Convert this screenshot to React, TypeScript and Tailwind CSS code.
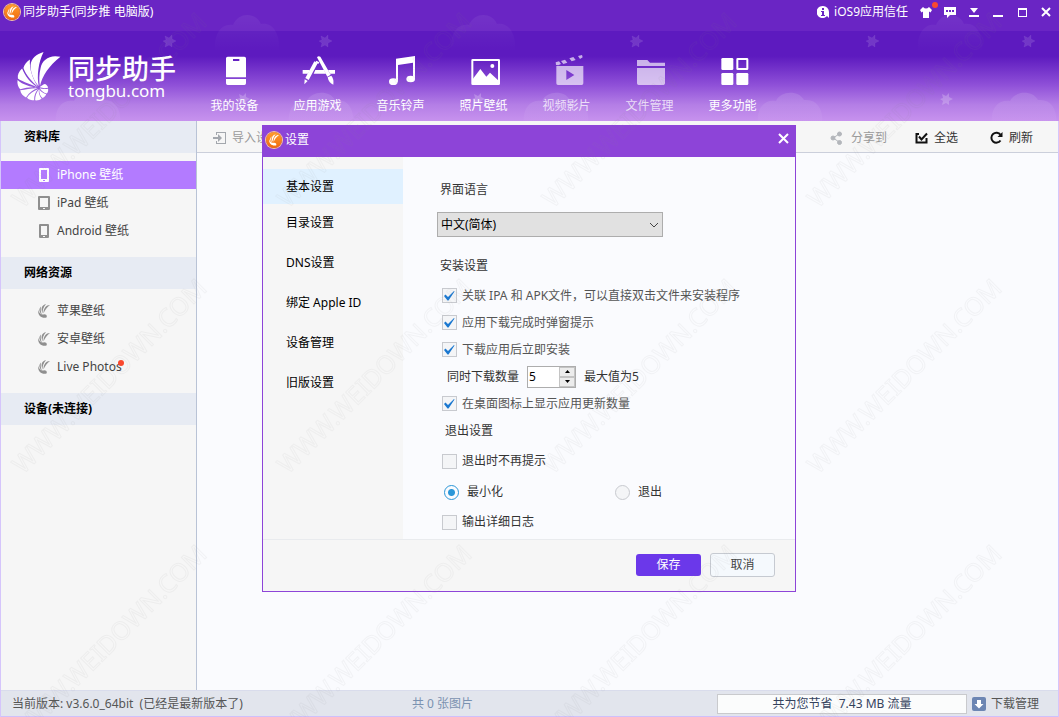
import React from "react";

interface NavItemI {
  label: string;
  viewBox: string;
  dimmed?: boolean;
  icon: React.ReactNode;
}

const navItems: NavItemI[] = [
  {
    label: "我的设备",
    viewBox: "657 165 96 90",
    icon: (
      <path
        fillRule="evenodd"
        d="M683 170h50q5 0 5 5v57h-60v-57q0-5 5-5zM699 177v6h19v-6zM678 237h60v13q0 5-5 5h-50q-5 0-5-5z"
      />
    ),
  },
  {
    label: "应用游戏",
    viewBox: "126 165 96 90",
    icon: (
      <>
        <path d="M128 210h22l-6 11h-16zM166 210h26l6 11h-37zM204 210h21v11h-15z" />
        <path d="M163 184l10 6-27 50-10-6zM134 238l9 5-10 10z" />
        <path d="M166 187l3-5 9 5-3 5z" />
        <path d="M171 172q4-6 10-2l31 54-10 6zM203 232l11-5q8 9 6 27-14-5-17-22z" />
      </>
    ),
  },
  {
    label: "音乐铃声",
    viewBox: "375 165 96 90",
    icon: (
      <>
        <path d="M408 176l57-8v70h-6v-50l-45 7v50h-6z" />
        <ellipse cx="400" cy="245" rx="13" ry="10" />
        <ellipse cx="452" cy="237" rx="13" ry="10" />
      </>
    ),
  },
  {
    label: "照片壁纸",
    viewBox: "624 165 96 90",
    icon: (
      <>
        <path fillRule="evenodd" d="M638 177h78q4 0 4 4v70q0 4-4 4h-78q-4 0-4-4v-70q0-4 4-4zM640 183v66h74v-66z" />
        <path d="M639 236l22-29 18 23 11-12 26 24v11h-77z" />
        <circle cx="697" cy="198" r="6" />
      </>
    ),
  },
  {
    label: "视频影片",
    viewBox: "62 165 96 90",
    dimmed: true,
    icon: (
      <>
        <path d="M76 187l10-3 6 8-8 4-7-1zM92 183l12-4 7 9-12 4zM117 175l12-4 7 9-12 4zM143 168l12-3 2 7-8 5z" />
        <path fillRule="evenodd" d="M78 198h81v52q0 5-5 5h-71q-5 0-5-5zM108 210v30l24-15z" />
      </>
    ),
  },
  {
    label: "文件管理",
    viewBox: "312 165 96 90",
    dimmed: true,
    icon: <path d="M321 180h31l8 8h45v10h-84zM321 204h84v46q0 5-5 5h-74q-5 0-5-5z" />,
  },
  {
    label: "更多功能",
    viewBox: "560 165 96 90",
    icon: (
      <>
        <rect x="573" y="174" width="36" height="36" rx="4" />
        <rect x="573" y="219" width="36" height="36" rx="4" />
        <rect x="618" y="219" width="36" height="36" rx="4" />
        <path fillRule="evenodd" d="M622 174h28q4 0 4 4v28q0 4-4 4h-28q-4 0-4-4v-28q0-4 4-4zM624 180v24h24v-24z" />
      </>
    ),
  },
];

const settingTabs = ["目录设置", "DNS设置", "绑定 Apple ID", "设备管理", "旧版设置"];

const Shell = ({className}: {className?: string}) => (
  <svg viewBox="50 150 136 154" className={className} fill="currentColor" aria-hidden="true">
    <path d="M184 168C150 160 128 178 123 202C118 222 118 242 121 258C128 228 148 196 184 168Z" />
    <path d="M132 153C110 160 94 172 92 194C92 220 104 244 117 258C111 225 116 185 132 153Z" />
    <path d="M90 176C80 183 73 192 70 202C78 225 98 245 115 260C98 235 88 205 90 176Z" />
    <path d="M66 204C56 212 51 224 53 235C70 247 95 253 113 262C92 248 75 228 66 204Z" />
    <path d="M52 239C50 250 54 262 60 268C78 262 98 260 113 263C92 260 68 254 52 239Z" />
    <path d="M60 271C62 282 70 290 78 293C88 278 100 269 114 265C95 264 78 269 60 271Z" />
    <path d="M81 294C86 300 95 302 103 302C102 288 107 275 116 267C100 273 88 282 81 294Z" />
    <path d="M106 302C114 303 122 300 126 297C118 288 116 276 118 268C109 278 106 290 106 302Z" />
    <path d="M129 295C135 292 139 286 140 283C130 280 122 274 119 267C118 280 122 290 129 295Z" />
    <path d="M142 281C146 277 147 270 146 266C137 268 127 268 120 265C126 274 134 280 142 281Z" />
    <path d="M146 263C145 258 141 254 136 252C130 254 124 258 120 262C129 265 138 265 146 263Z" />
  </svg>
);

// simplified shell, the full one turns to mush below 20px
const SmallShell = ({className}: {className?: string}) => (
  <svg viewBox="0 0 12 14" className={className} fill="currentColor" aria-hidden="true">
    <path d="M12 1C8 1 5.500 4 5.500 9.500C7 6 9 3 12 1Z" />
    <path d="M8 0C4 1 2.500 4 4.500 9.500C4.500 6 5.500 3 8 0Z" />
    <path d="M3 2.500C0.500 5 1 8 4 10.500C2.500 8 2.500 5 3 2.500Z" />
    <path d="M0.300 6C-0.500 11 3 14.500 8.500 13.500C9.500 11.500 8 10 6 10.200C4 11 1 9.500 0.300 6Z" />
  </svg>
);

const AppBadge = () => (
  <span className="flex size-4 items-center justify-center rounded-full bg-linear-to-b from-[#ff9d2e] to-[#f06a0a] text-white ring-1 ring-[#f8c9a0]">
    <SmallShell className="h-3 w-2.5" />
  </span>
);

const cloudPath = "M0 44C-2 28 8 18 22 20C28 8 50 8 56 19C72 17 80 30 78 44Z";
const starPath = "M2 1L6 3L9 0L9 4L13 6L9 8L9 12L6 10L2 12L3 8L0 6L3 5Z";

const HeaderScene = () => (
  <svg className="absolute inset-0 size-full" aria-hidden="true">
    <defs>
      <linearGradient id="cloudTop" x1="0" y1="0" x2="0" y2="1">
        <stop offset="0" stopColor="#fff" stopOpacity="0.06" />
        <stop offset="1" stopColor="#fff" stopOpacity="0" />
      </linearGradient>
      <linearGradient id="cloudLow" x1="0" y1="0" x2="0" y2="1">
        <stop offset="0" stopColor="#fff" stopOpacity="0.12" />
        <stop offset="1" stopColor="#fff" stopOpacity="0.02" />
      </linearGradient>
    </defs>
    {[215, 451, 918].map((x) => (
      <path key={x} d={cloudPath} fill="url(#cloudTop)" transform={`translate(${x} 3) scale(.82 1.100)`} />
    ))}
    {[56, 289, 524, 758, 992].map((x) => (
      <path key={x} d={cloudPath} fill="url(#cloudLow)" transform={`translate(${x} 83) scale(.82 .9)`} />
    ))}
    {[163, 319, 630, 866, 1022].map((x) => (
      <path
        key={x}
        d={starPath}
        fill="#fff"
        fillOpacity="0.13"
        stroke="#fff"
        strokeOpacity="0.05"
        transform={`translate(${x} 35)`}
      />
    ))}
    {[237, 472, 940].map((x) => (
      <path key={x} d={starPath} fill="#fff" fillOpacity="0.22" transform={`translate(${x} 93)`} />
    ))}
  </svg>
);

const Watermark = () => (
  <svg className="pointer-events-none fixed inset-0 z-20 size-full" aria-hidden="true">
    <defs>
      <pattern id="mark" x="0" y="236" width="265" height="266" patternUnits="userSpaceOnUse">
        <text
          transform="translate(23 239) rotate(-45)"
          className="font-['Noto_Sans'] text-[25px]"
          fill="none"
          stroke="#808080"
          strokeOpacity="0.07"
          strokeWidth="1"
        >
          WWW.WEIDOWN.COM
        </text>
      </pattern>
    </defs>
    <rect width="100%" height="100%" fill="url(#mark)" />
  </svg>
);

const TitleBar = () => (
  <div className="relative flex h-[31px] items-start justify-between bg-[#6a25c4] text-white">
    <div className="flex h-6 items-center gap-[3px] pl-1">
      <AppBadge />
      <h1>同步助手(同步推 电脑版)</h1>
    </div>
    <div className="flex h-6 items-center gap-3 pr-[7px]">
      <button className="flex items-center gap-1">
        <svg width="13" height="14" viewBox="0 0 13 14" aria-hidden="true">
          <path fill="#fff" d="M6 1a6 6 0 1 0 4 10l2 2V7a6 6 0 0 0-6-6z" />
          <path fill="#6a25c4" d="M5 3h2v2H5zM4 6h3v4h1v1H4v-1h1V7H4z" />
        </svg>
        iOS9应用信任
      </button>
      <button className="relative" aria-label="皮肤">
        <svg width="12" height="12" viewBox="0 0 12 12" fill="#fff" aria-hidden="true">
          <path d="M3 1q3 3 6 0l3 3-1.500 2.500-1.500-1V12H3V5.500l-1.500 1L0 4z" />
        </svg>
        <span className="absolute -top-1 -right-1.5 size-1.5 rounded-full bg-[#f9492f]" />
      </button>
      <button aria-label="反馈">
        <svg width="12" height="12" viewBox="0 0 12 12" aria-hidden="true">
          <path fill="#fff" d="M0 1h12v8H6l-3 3V9H0z" />
          <path fill="#6a25c4" d="M2 4h2v2H2zM5 4h2v2H5zM8 4h2v2H8z" />
        </svg>
      </button>
      <button aria-label="菜单">
        <svg width="12" height="12" viewBox="0 0 12 12" fill="#fff" aria-hidden="true">
          <path d="M2 2h8L6 7zM1 9h10v2H1z" />
        </svg>
      </button>
      <button aria-label="最小化窗口">
        <svg width="12" height="12" viewBox="0 0 12 12" fill="#fff" aria-hidden="true">
          <path d="M1 9h10v2H1z" />
        </svg>
      </button>
      <button aria-label="最大化">
        <svg width="12" height="12" viewBox="0 0 12 12" fill="#fff" aria-hidden="true">
          <path fillRule="evenodd" d="M2 2h9v9H2zM3 4v6h7V4z" />
        </svg>
      </button>
      <button aria-label="关闭">
        <svg width="12" height="12" viewBox="0 0 12 12" stroke="#fff" strokeWidth="2" aria-hidden="true">
          <path d="M2 2l8 8M10 2l-8 8" />
        </svg>
      </button>
    </div>
  </div>
);

const Header = () => (
  <header className="relative overflow-hidden">
    <TitleBar />
    <div className="flex h-[90px] items-start bg-[linear-gradient(#5d1abf_0%,#5d1abf_28%,#8f50d8_60%,#b47ee6_82%,#c792ee_100%)] text-white">
      <div className="flex w-[193px] shrink-0 items-start pt-5 pl-4">
        <Shell className="h-[50px] w-[46px]" />
        <div className="pt-1 pl-1.5">
          <div className="text-[27px]/[28px] font-medium whitespace-nowrap">同步助手</div>
          <div className="text-[17px]/[16px]">tongbu.com</div>
        </div>
      </div>
      <nav className="flex">
        {navItems.map((item) => (
          <button key={item.label} className="flex w-[83px] flex-col items-center pt-6">
            <svg
              viewBox={item.viewBox}
              className={`h-[30px] w-8 overflow-visible fill-white ${item.dimmed ? "opacity-65" : ""}`}
              aria-hidden="true"
            >
              {item.icon}
            </svg>
            <span className={`mt-3 ${item.dimmed ? "text-white/75" : ""}`}>{item.label}</span>
          </button>
        ))}
      </nav>
    </div>
    <div className="pointer-events-none absolute inset-0">
      <HeaderScene />
    </div>
  </header>
);

const DeviceIcon = ({wide}: {wide?: boolean}) => (
  <svg width="12" height="14" viewBox="0 0 12 14" fill="currentColor" aria-hidden="true">
    {wide ? (
      <path fillRule="evenodd" d="M1 0h10q1 0 1 1v12q0 1-1 1H1q-1 0-1-1V1q0-1 1-1zM2 2v9h8V2zM5 12v1h2v-1z" />
    ) : (
      <path fillRule="evenodd" d="M2 0h8q1 0 1 1v12q0 1-1 1H2q-1 0-1-1V1q0-1 1-1zM3 2v9h6V2zM5 12v1h2v-1z" />
    )}
  </svg>
);

const baseItemClass = "flex h-7 w-full items-center gap-[7px] pl-[37px]";

const Sidebar = () => {
  const headClass = "flex h-8 items-center bg-[#e7ebf3] pl-[23px] font-bold text-black";
  return (
    <aside className="w-[196px] shrink-0 border-r border-[#b9c3d6] bg-[#f6f6f6] text-[#444]">
      <h2 className={headClass}>资料库</h2>
      <ul className="pt-2 pb-3">
        <li>
          <button className={`${baseItemClass} bg-[#b37bff] text-white`}>
            <DeviceIcon />
            iPhone 壁纸
          </button>
        </li>
        <li>
          <button className={baseItemClass}>
            <span className="text-[#8f8f8f]"><DeviceIcon wide /></span>
            iPad 壁纸
          </button>
        </li>
        <li>
          <button className={baseItemClass}>
            <span className="text-[#8f8f8f]"><DeviceIcon /></span>
            Android 壁纸
          </button>
        </li>
      </ul>
      <h2 className={headClass}>网络资源</h2>
      <ul className="pt-2 pb-3">
        {["苹果壁纸", "安卓壁纸", "Live Photos"].map((label) => (
          <li key={label}>
            <button className={baseItemClass}>
              <SmallShell className="h-3.5 w-3 text-[#8f8f8f]" />
              <span className="relative">
                {label}
                {label === "Live Photos" && (
                  <span className="absolute top-0.5 -right-0.5 size-1.5 rounded-full bg-[#f9492f]" />
                )}
              </span>
            </button>
          </li>
        ))}
      </ul>
      <h2 className={headClass}>设备(未连接)</h2>
    </aside>
  );
};

const Toolbar = () => (
  <div className="flex h-8 items-center justify-between border-b border-[#cbcfdb] bg-[#f6f6f6] pt-0.5 pr-[25px] pl-4">
    <button className="flex items-center gap-1.5 text-[#9a9a9a]">
      <svg width="13" height="12" viewBox="0 0 13 12" fill="#a3a7ad" aria-hidden="true">
        <path d="M3 0h10v12H3V9h1v2h8V1H4v2H3zM0 5h5V2l4 4-4 4V7H0z" />
      </svg>
      导入设备
    </button>
    <div className="flex items-center gap-7 text-[#333]">
      <button className="flex items-center gap-2 text-[#9a9a9a]">
        <svg width="13" height="14" viewBox="0 0 13 14" fill="#b3b6bb" stroke="#b3b6bb" aria-hidden="true">
          <path fill="none" d="M10 2.500L3 7l7 4.500" />
          <circle cx="9.500" cy="3" r="2" />
          <circle cx="3" cy="7" r="2" />
          <circle cx="9.500" cy="11.500" r="2" />
        </svg>
        分享到
      </button>
      <button className="flex items-center gap-1.5">
        <svg width="13" height="12" viewBox="0 0 13 12" fill="none" stroke="#111" strokeWidth="2" aria-hidden="true">
          <path d="M4 2H1.500v8.500h10V6M4 4.500L6.500 7.500L12 1.500" />
        </svg>
        全选
      </button>
      <button className="ml-1 flex items-center gap-1.5">
        <svg width="13" height="13" viewBox="0 0 13 13" aria-hidden="true">
          <path d="M10.500 9.500A5 5 0 1 1 10.500 3.800" fill="none" stroke="#111" strokeWidth="2" />
          <path d="M12.500 1v5H7.500z" fill="#111" />
        </svg>
        刷新
      </button>
    </div>
  </div>
);

interface CheckRowProps {
  label: string;
  defaultChecked?: boolean;
  soft?: boolean;
}

const CheckRow = ({label, defaultChecked, soft}: CheckRowProps) => (
  <label className={`flex items-center gap-[5px] pl-[5px] ${soft ? "h-[30px] text-[#333]" : "h-[27px] text-[#555]"}`}>
    <span className="relative flex size-[15px]">
      <input
        type="checkbox"
        defaultChecked={defaultChecked}
        className="peer size-[15px] appearance-none border border-[#c8cacf] bg-[#f4f5f7]"
      />
      <svg
        viewBox="0 0 15 15"
        className="pointer-events-none absolute inset-0 hidden size-[15px] peer-checked:block"
        aria-hidden="true"
      >
        <path d="M2 8l1.500-1.500 2.500 2.500L12 3l.500.500L6.500 12.500H5.500z" fill="#1b78d0" />
      </svg>
    </span>
    {label}
  </label>
);

const ExitRadio = ({label, defaultChecked}: CheckRowProps) => (
  <label className="flex items-center gap-2">
    <input
      type="radio"
      name="exit"
      defaultChecked={defaultChecked}
      className="size-[15px] appearance-none rounded-full border border-[#c8cacf] bg-[#f4f5f7] checked:border-[#2b97d8] checked:bg-[radial-gradient(circle,#2b97d8_3px,#fafbfe_4px)]"
    />
    {label}
  </label>
);

const SettingsForm = () => {
  const [count, setCount] = React.useState(5);
  const stepClass = "flex flex-1 items-center justify-center border border-[#c4c4c4] bg-[#ececec]";

  return (
    <div className="min-w-0 flex-1 bg-[#fafbfe] pt-6 pr-[9px] pb-0.5 pl-[34px] text-[#333]">
      <label htmlFor="language" className="block pl-[3px]">界面语言</label>
      <div className="relative mt-[13px] w-[226px]">
        <select
          id="language"
          className="block h-[25px] w-full appearance-none border border-[#adadad] bg-[#e1e1e1] pl-[3px] text-black"
        >
          <option>中文(简体)</option>
        </select>
        <svg
          className="pointer-events-none absolute top-2 right-1"
          width="10"
          height="10"
          viewBox="0 0 10 10"
          fill="none"
          stroke="#444"
          aria-hidden="true"
        >
          <path d="M1 3l4 4 4-4" />
        </svg>
      </div>
      <h3 className="mt-5 mb-[7px] pl-[3px]">安装设置</h3>
      <CheckRow label="关联 IPA 和 APK文件，可以直接双击文件来安装程序" defaultChecked />
      <CheckRow label="应用下载完成时弹窗提示" defaultChecked />
      <CheckRow label="下载应用后立即安装" defaultChecked />
      <div className="flex h-[27px] items-center gap-2 pl-[10px]">
        <label htmlFor="count">同时下载数量</label>
        <div className="flex h-[22px] w-[49px] border border-[#adadad] bg-white">
          <input
            id="count"
            type="number"
            min={1}
            max={5}
            value={count}
            onChange={(e) => setCount(Number(e.target.value))}
            className="w-0 flex-1 [appearance:textfield] pl-px text-black [&::-webkit-inner-spin-button]:appearance-none"
          />
          <div className="flex w-4 flex-col">
            <button className={stepClass} aria-label="增加" onClick={() => setCount(Math.min(5, count + 1))}>
              <svg width="5" height="3" viewBox="0 0 5 3" aria-hidden="true"><path d="M0 3L2.500 0L5 3z" /></svg>
            </button>
            <button className={stepClass} aria-label="减少" onClick={() => setCount(Math.max(1, count - 1))}>
              <svg width="5" height="3" viewBox="0 0 5 3" aria-hidden="true"><path d="M0 0h5L2.500 3z" /></svg>
            </button>
          </div>
        </div>
        <span>最大值为5</span>
      </div>
      <CheckRow label="在桌面图标上显示应用更新数量" defaultChecked />
      <h3 className="mb-0.5 flex h-[27px] items-center pl-2">退出设置</h3>
      <CheckRow label="退出时不再提示" soft />
      <div className="mt-px grid h-[30px] grid-cols-2 items-center pl-[7px]">
        <ExitRadio label="最小化" defaultChecked />
        <ExitRadio label="退出" />
      </div>
      <CheckRow label="输出详细日志" soft />
    </div>
  );
};

const SettingsDialog = () => (
  <div className="fixed inset-0 z-10 flex items-center justify-center pr-px">
    <div role="dialog" aria-label="设置" className="w-[534px] border border-t-0 border-[#8d44d8] bg-[#f6f6f6]">
      <div className="flex h-8 items-center justify-between bg-[#8d44d8] pr-1.5 pl-[3px] text-white">
        <div className="flex items-center gap-[3px] pb-0.5">
          <AppBadge />
          <h2>设置</h2>
        </div>
        <button className="pb-1.5" aria-label="关闭设置">
          <svg width="11" height="11" viewBox="0 0 11 11" stroke="#fff" strokeWidth="2" aria-hidden="true">
            <path d="M1 1l9 9M10 1l-9 9" />
          </svg>
        </button>
      </div>
      <div className="flex">
        <ul className="w-[140px] shrink-0 pt-3 text-black">
          <li>
            <button className="flex h-[35px] w-full items-center bg-[#e0f1ff] pl-[23px]">基本设置</button>
          </li>
          {settingTabs.map((tab) => (
            <li key={tab}>
              <button className="flex h-10 w-full items-center pb-0.5 pl-[23px]">{tab}</button>
            </li>
          ))}
        </ul>
        <SettingsForm />
      </div>
      <div className="flex h-[52px] items-center justify-end gap-[9px] border-t border-[#e9ebee] pr-5 pb-px">
        <button className="h-[22px] w-[65px] rounded-[3px] bg-[#6b38ea] text-white">保存</button>
        <button className="h-6 w-[65px] rounded-[3px] border border-[#c6cad1] bg-[#f5f9fd] text-[#444]">取消</button>
      </div>
    </div>
  </div>
);

const StatusBar = () => (
  <footer className="flex h-[27px] items-center border-t border-b border-t-[#d9dcec] border-b-[#cfc0fb] bg-[#e2e5ed] pr-[19px] pl-[11px] text-[#555]">
    <span className="w-[400px] whitespace-pre">当前版本: v3.6.0_64bit  (已经是最新版本了)</span>
    <span className="flex-1 text-[#7b92b0]">共 0 张图片</span>
    <span className="flex h-5 w-[250px] items-center justify-center border border-[#c9cacd] bg-[#fbfcfc] whitespace-pre text-[#34425c]">
      共为您节省  7.43 MB 流量
    </span>
    <button className="ml-[5px] flex items-center gap-[5px]">
      <svg width="14" height="14" viewBox="0 0 14 14" aria-hidden="true">
        <rect width="14" height="14" rx="2" fill="#6d86b3" />
        <path d="M5 3h4v4h2.500L7 11.500L2.500 7H5z" fill="#fff" />
      </svg>
      下载管理
    </button>
  </footer>
);

export default function App() {
  return (
    <div className="flex min-h-screen flex-col bg-[#fafbfe] font-['Noto_Sans','Noto_Sans_CJK_SC',sans-serif] text-[12px]/[18px]">
      <Header />
      <div className="flex flex-1 flex-col border-x border-[#d5c5fb]">
        <main className="flex flex-1">
          <Sidebar />
          <section className="min-w-0 flex-1">
            <Toolbar />
          </section>
        </main>
        <StatusBar />
      </div>
      <SettingsDialog />
      <Watermark />
    </div>
  );
}
